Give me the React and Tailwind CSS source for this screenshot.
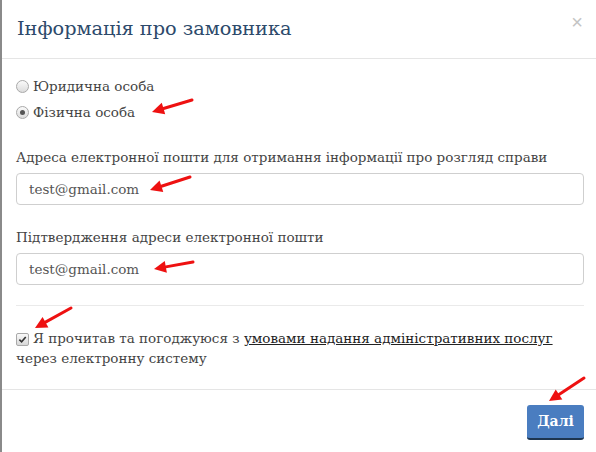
import React from 'react'

function Arrow({ x1, y1, x2, y2 }) {
  // head at (x2, y2)
  const a = Math.atan2(y2 - y1, x2 - x1)
  const len = 12
  const w = 6
  const bx = x2 - len * Math.cos(a)
  const by = y2 - len * Math.sin(a)
  const p1 = `${bx + w * Math.sin(a)},${by - w * Math.cos(a)}`
  const p2 = `${bx - w * Math.sin(a)},${by + w * Math.cos(a)}`
  return <g>
    <line x1={x1} y1={y1} x2={bx} y2={by} stroke="#ee1111" strokeWidth="3" strokeLinecap="round" />
    <polygon points={`${x2},${y2} ${p1} ${p2}`} fill="#ee1111" />
  </g>
}

export default function App() {
  return <div className="relative h-[452px] w-[596px] overflow-hidden border-l-2 border-[#8a8a8a] bg-white font-['DejaVu_Serif','DejaVu_Sans',serif] text-[13.5px] text-[#444]">
    <div className="flex h-[59px] items-center justify-between border-b border-[#e5e5e5] pl-[15px] pr-[13px]">
      <h1 className="text-[19.3px] font-normal text-[#2d4a6b]">Інформація про замовника</h1>
      <span className="-translate-y-[7px] font-['Liberation_Sans',sans-serif] text-[20px] leading-none text-[#c4c4c4]">×</span>
    </div>
    <div className="px-[14px] pt-[17px]">
      <div className="space-y-[6px]">
        <label className="flex items-center gap-[4px] leading-[20px]">
          <span className="inline-block h-[13px] w-[13px] rounded-full border border-[#a9a9a9] bg-gradient-to-b from-[#fafafa] to-[#dcdcdc]" />
          Юридична особа
        </label>
        <label className="flex items-center gap-[4px] leading-[20px]">
          <span className="flex h-[13px] w-[13px] items-center justify-center rounded-full border border-[#a9a9a9] bg-gradient-to-b from-[#fafafa] to-[#dcdcdc]">
            <span className="h-[5px] w-[5px] rounded-full bg-[#555]" />
          </span>
          Фізична особа
        </label>
      </div>
      <div className="mt-[25px]">
        <p className="leading-[20px]">Адреса електронної пошти для отримання інформації про розгляд справи</p>
        <div className="mt-[6px] flex h-[32px] w-[568px] items-center rounded-[4px] border border-[#cfcfcf] px-[12px] text-[#555]">test@gmail.com</div>
      </div>
      <div className="mt-[22px]">
        <p className="leading-[20px]">Підтвердження адреси електронної пошти</p>
        <div className="mt-[6px] flex h-[32px] w-[568px] items-center rounded-[4px] border border-[#cfcfcf] px-[12px] text-[#555]">test@gmail.com</div>
      </div>
      <div className="mt-[20px] w-[568px] border-t border-[#eaeaea]" />
      <div className="mt-[22px] w-[568px] leading-[20px]">
        <span className="mr-[4px] inline-flex h-[13px] w-[13px] translate-y-[1px] items-center justify-center rounded-[2px] border border-[#a9a9a9] bg-gradient-to-b from-[#fafafa] to-[#d8d8d8] align-baseline">
          <svg width="9" height="9" viewBox="0 0 10 10"><path d="M1.5 5.2 L4 7.6 L8.6 2.2" fill="none" stroke="#333" strokeWidth="1.8" /></svg>
        </span>
        Я прочитав та погоджуюся з <span className="text-[#222] underline">умовами надання адміністративних послуг</span><br />
        через електронну систему
      </div>
    </div>
    <div className="mt-[21px] flex justify-end border-t border-[#e5e5e5] px-[12px] pt-[15px]">
      <button className="h-[35px] w-[57px] rounded-[3px] border-b-2 border-[#1d3550] bg-[#4a7dc0] font-['DejaVu_Serif','DejaVu_Sans',serif] text-[14px] font-bold text-white">Далі</button>
    </div>
    <svg className="pointer-events-none absolute left-0 top-0" width="596" height="452">
      <Arrow x1={190} y1={100} x2={150} y2={112} />
      <Arrow x1={188} y1={177} x2={148} y2={190} />
      <Arrow x1={191} y1={262} x2={152} y2={269} />
      <Arrow x1={69} y1={308} x2={33} y2={328} />
      <Arrow x1={582} y1={378} x2={547} y2={401} />
    </svg>
  </div>
}
